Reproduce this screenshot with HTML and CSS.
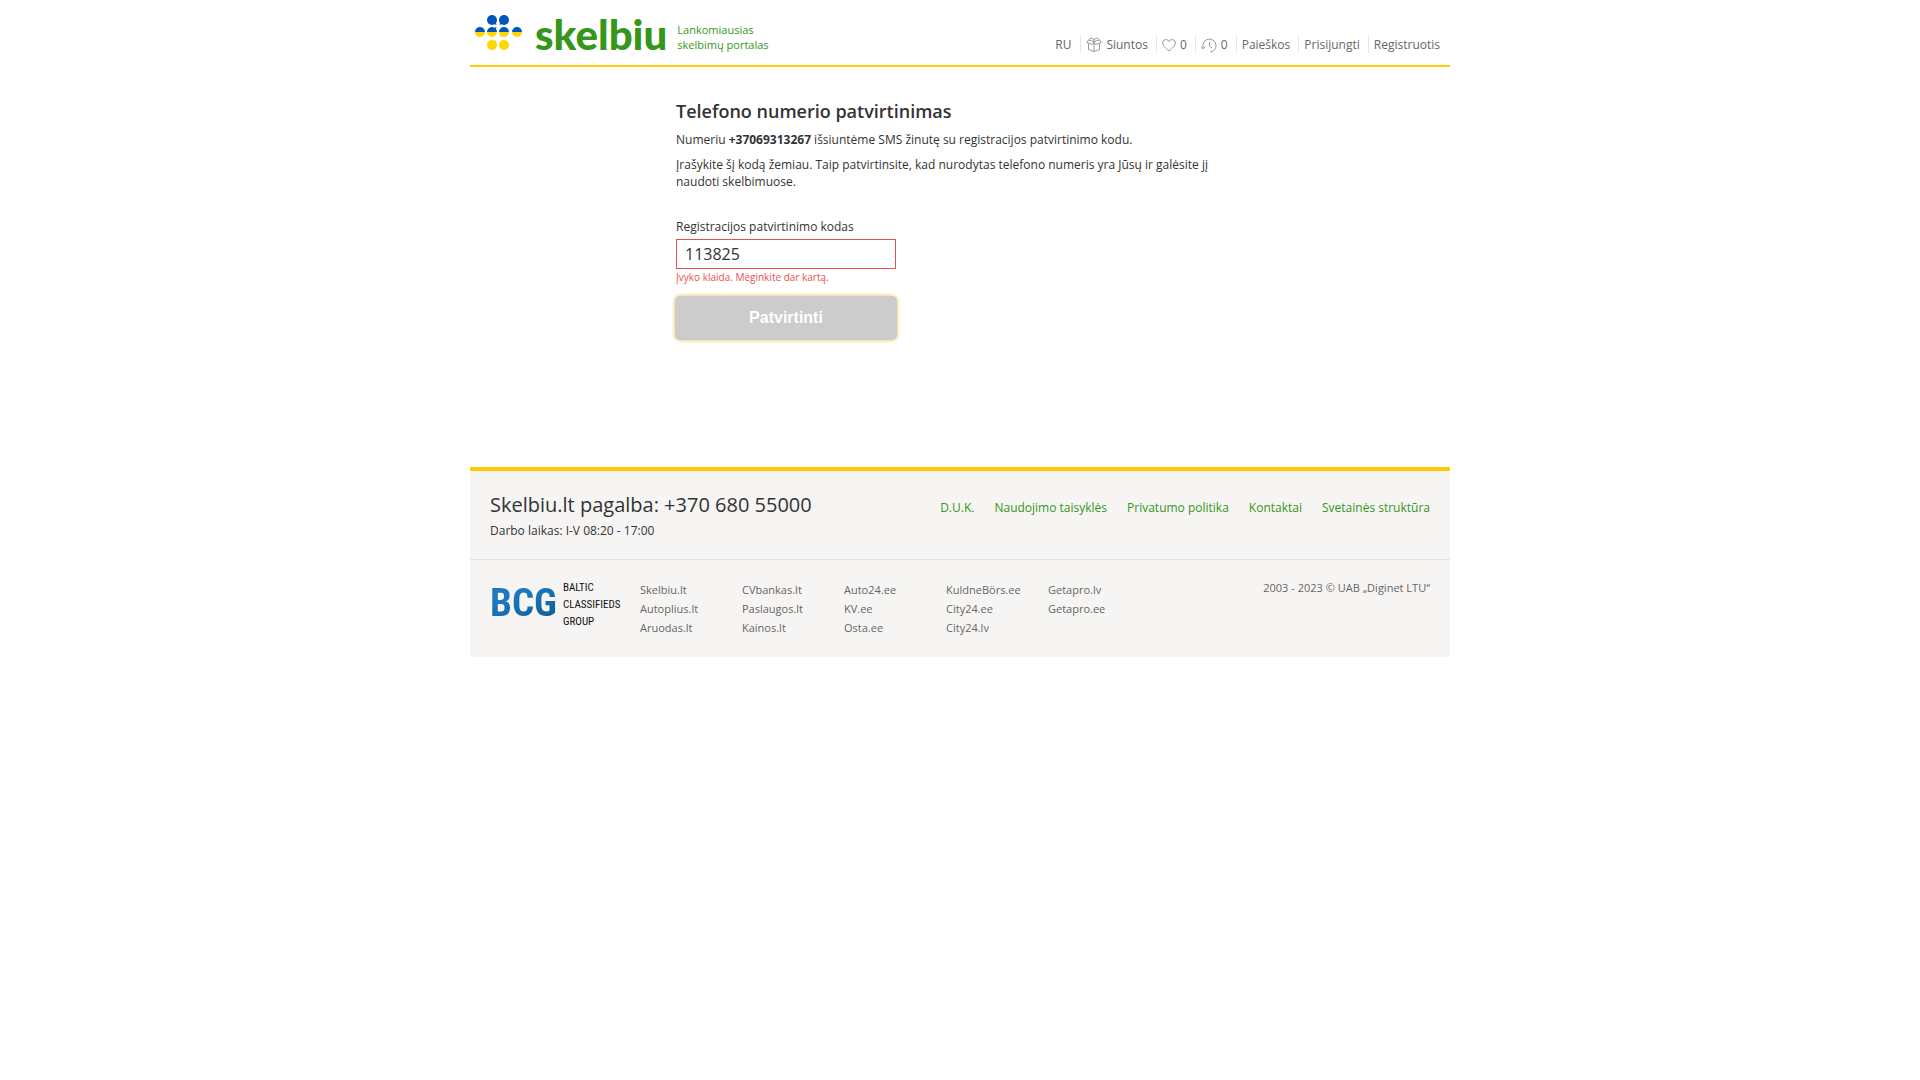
FILE: index.html
```html
<!DOCTYPE html>
<html lang="lt">
<head>
<meta charset="utf-8">
<meta name="viewport" content="width=device-width, initial-scale=1">
<title>Telefono numerio patvirtinimas - Skelbiu.lt</title>
<link rel="stylesheet" href="styles.css">
</head>
<body>
<div class="page">
  <header class="header">
    <a class="brand" href="#">
      <svg class="brand-mark" viewBox="0 0 48 38" width="48" height="38" aria-hidden="true">
        <g fill="#0057b8">
          <circle cx="17" cy="6" r="5"/>
          <circle cx="29" cy="6" r="5"/>
          <path d="M19 10l2.500 1L21 8.500zM25 8.500l-.5 2.500L27 10z"/>
          <path d="M0 18a5 5 0 0 1 10 0zM12 18a5 5 0 0 1 7.500-4.300l2-.7-.5 2q1 1.500 1 3zM24 18a5 5 0 0 1 10 0zM37 18a5 5 0 0 1 10 0z"/>
        </g>
        <g fill="#ffd700">
          <path d="M0 18h10a5 5 0 0 1-10 0zM12 18h10a5 5 0 0 1-10 0zM24 18h10a5 5 0 0 1-7.500 4.300l-2 .7.5-2q-1-1.500-1-3zM37 18h10a5 5 0 0 1-10 0z"/>
          <circle cx="17" cy="31" r="5"/>
          <circle cx="29" cy="31" r="5"/>
          <path d="M19 27l2.500-1L21 28.500z"/>
        </g>
      </svg>
      <span class="brand-name">skelbiu</span>
      <span class="brand-slogan">Lankomiausias<br>skelbimų portalas</span>
    </a>
    <nav class="menu">
      <a href="#">RU</a>
      <a href="#">
        <svg class="icon" viewBox="0 0 16 16" width="16" height="16" aria-hidden="true"><path d="M8 4.500L2.500 3L.8 5.500l5.700 2L8 4.500l1.500 3 5.700-2L13.500 3zM2.500 3L5 1l3 1.500L11 1l2.500 2M8 2.500v2M2.500 6.500v6L8 14.500l5.500-2v-6M8 5v9.500"/></svg>
        Siuntos</a>
      <a href="#">
        <svg class="icon" viewBox="0 0 14 16" width="14" height="16" aria-hidden="true"><path d="M7 14C4 11.500.7 9 .7 6A3.300 3.300 0 0 1 7 4.500 3.300 3.300 0 0 1 13.300 6C13.300 9 10 11.500 7 14z"/></svg>
        0</a>
      <a href="#">
        <svg class="icon" viewBox="0 0 16 16" width="16" height="16" aria-hidden="true"><path d="M2 11.500V8.500a6.500 6.500 0 1 1 7 6.500M.3 9.500L2 12l2-2.500M8.500 5v4l2.500 2"/></svg>
        0</a>
      <a href="#">Paieškos</a>
      <a href="#">Prisijungti</a>
      <a href="#">Registruotis</a>
    </nav>
  </header>

  <main class="content">
    <h1>Telefono numerio patvirtinimas</h1>
    <p>Numeriu <strong>+37069313267</strong> išsiuntėme SMS žinutę su registracijos patvirtinimo kodu.</p>
    <p>Įrašykite šį kodą žemiau. Taip patvirtinsite, kad nurodytas telefono numeris yra Jūsų ir galėsite jį naudoti skelbimuose.</p>
    <form class="form">
      <label for="code">Registracijos patvirtinimo kodas</label>
      <input id="code" type="text" value="113825" aria-describedby="code-error">
      <span id="code-error" class="error">Įvyko klaida. Mėginkite dar kartą.</span>
      <button type="button">Patvirtinti</button>
    </form>
  </main>

  <footer class="footer">
    <div class="footer-top">
      <div>
        <div class="help">Skelbiu.lt pagalba: +370 680 55000</div>
        <div class="hours">Darbo laikas: I-V 08:20 - 17:00</div>
      </div>
      <nav class="footer-nav">
        <a href="#">D.U.K.</a>
        <a href="#">Naudojimo taisyklės</a>
        <a href="#">Privatumo politika</a>
        <a href="#">Kontaktai</a>
        <a href="#">Svetainės struktūra</a>
      </nav>
    </div>
    <div class="footer-bottom">
      <a class="group" href="#">
        <span class="group-mark">BCG</span>
        <span class="group-name">BALTIC<br>CLASSIFIEDS<br>GROUP</span>
      </a>
      <ul class="sites">
        <li><a href="#">Skelbiu.lt</a></li>
        <li><a href="#">Autoplius.lt</a></li>
        <li><a href="#">Aruodas.lt</a></li>
        <li><a href="#">CVbankas.lt</a></li>
        <li><a href="#">Paslaugos.lt</a></li>
        <li><a href="#">Kainos.lt</a></li>
        <li><a href="#">Auto24.ee</a></li>
        <li><a href="#">KV.ee</a></li>
        <li><a href="#">Osta.ee</a></li>
        <li><a href="#">KuldneBörs.ee</a></li>
        <li><a href="#">City24.ee</a></li>
        <li><a href="#">City24.lv</a></li>
        <li><a href="#">Getapro.lv</a></li>
        <li><a href="#">Getapro.ee</a></li>
      </ul>
      <div class="copyright">2003 - 2023 © UAB „Diginet LTU“</div>
    </div>
  </footer>
</div>
</body>
</html>
```
FILE: styles.css
```css
* {
  box-sizing: border-box;
}

body {
  margin: 0;
  background: #fff;
  color: #333;
  font: 12px/17px "Open Sans", sans-serif;
}

a {
  color: inherit;
  text-decoration: none;
}

.page {
  max-width: 980px;
  margin: 0 auto;
}

.header {
  display: flex;
  justify-content: space-between;
  align-items: flex-end;
  padding-top: 14px;
  border-bottom: 2px solid #ffcd05;
}

.brand {
  display: flex;
  padding-left: 5px;
  color: #359619;
}

.brand-mark {
  margin-right: 12px;
}

.brand-name {
  margin-right: 10px;
  font: 900 42px/40px Lato, sans-serif;
}

.brand-slogan {
  padding-top: 8px;
  padding-bottom: 13px;
  font-size: 11px;
  line-height: 15px;
}

.menu {
  display: flex;
  padding-bottom: 12px;
  color: #666;
}

.menu a {
  display: flex;
  align-items: center;
  gap: 4px;
  padding: 0 8px 0 5px;
  border-left: 1px solid #e6e6e6;
}

.menu a:first-child {
  padding-right: 9px;
  border-left: 0;
}

.menu a:last-child {
  padding-right: 10px;
}

.icon {
  fill: none;
  stroke: #999;
  stroke-linejoin: round;
}

.content {
  max-width: 568px;
  margin-left: 206px;
  padding: 31px 0 128px;
}

h1 {
  margin: 0 0 7px;
  font-size: 18px;
  font-weight: 600;
  line-height: 26px;
}

p {
  margin: 0 0 8px;
}

.form {
  display: flex;
  flex-direction: column;
  width: 220px;
  padding-top: 20px;
}

.form input {
  height: 30px;
  margin-top: 4px;
  padding: 0 8px;
  border: 1px solid #e94f4f;
  color: #333;
  font: 16px "Open Sans", sans-serif;
}

.error {
  color: #e94f4f;
  font-size: 10px;
  line-height: 16px;
}

.form button {
  height: 42px;
  margin-top: 12px;
  border: 0;
  border-radius: 4px;
  background: #ccc;
  box-shadow: 0 0 0 1px #ccc, 0 0 4px 1px #e0c04c;
  color: #fff;
  font: bold 16px "Liberation Sans", Arial, sans-serif;
}

.footer {
  border-top: 4px solid #ffcb05;
  background: #f6f5f3;
}

.footer-top {
  display: flex;
  justify-content: space-between;
  padding: 20px 20px;
  border-bottom: 1px solid #e3e3e3;
}

.help {
  margin-bottom: 3px;
  font-size: 20px;
  line-height: 28px;
}

.footer-nav {
  display: flex;
  gap: 20px;
  padding-top: 8px;
  color: #359619;
}

.footer-bottom {
  display: flex;
  padding: 19px 20px;
  color: #666;
  font-size: 11px;
}

.group {
  display: flex;
  width: 150px;
  gap: 6px;
  color: #111;
}

.group-mark {
  background: linear-gradient(160deg, #1c78c0 30%, #0a4f7c);
  background-clip: text;
  color: transparent;
  font: bold 39px/48px "Roboto Condensed", Roboto, sans-serif;
}

.group-name {
  font: 11px/17px "Roboto Condensed", Roboto, sans-serif;
}

.sites {
  display: grid;
  grid-template-rows: repeat(3, 19px);
  grid-auto-columns: 102px;
  grid-auto-flow: column;
  margin: 0;
  padding: 1px 0;
  list-style: none;
  line-height: 19px;
}

.copyright {
  margin-left: auto;
}
```
